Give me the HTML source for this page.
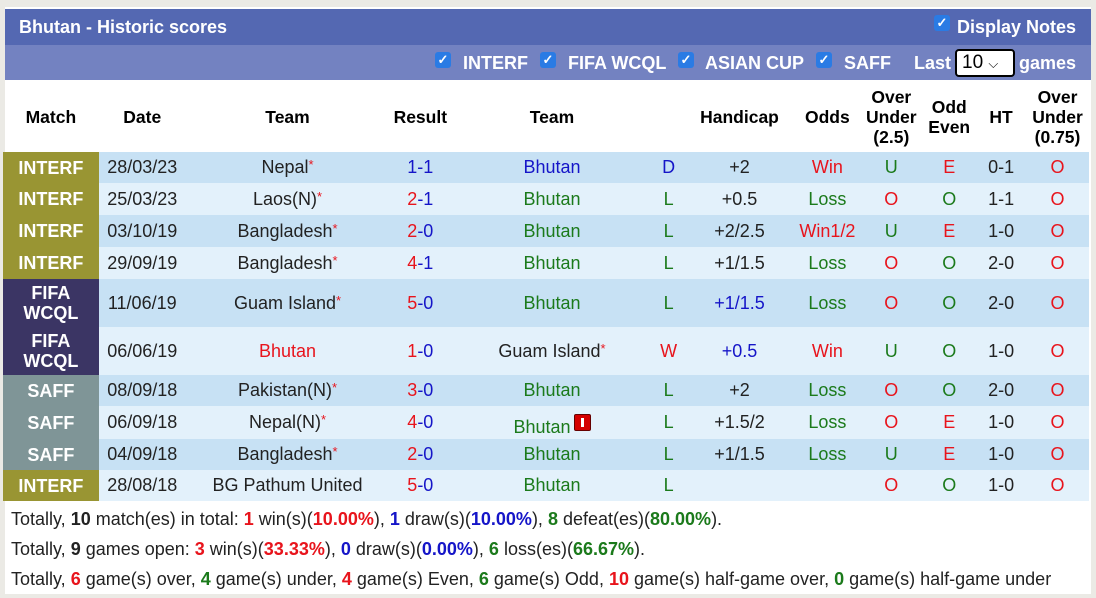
<!DOCTYPE html>
<html><head><style>
body{margin:0;background:#ebeae5;font-family:"Liberation Sans",Arial,sans-serif;width:1096px;height:598px;overflow:hidden;position:relative}
#box{position:absolute;left:5px;top:7px;width:1086px;height:587px;background:#fff}
#h1{position:absolute;left:0;top:2px;width:1086px;height:36px;background:#5468b2;color:#fff;font-weight:bold;font-size:18px}
#h2{position:absolute;left:0;top:38px;width:1086px;height:35px;background:#7382c1;color:#fff;font-weight:bold;font-size:18px}
#h2 span.t{position:absolute;top:8px}
.cb{position:absolute;display:inline-block;width:16px;height:16px;background:#2a7be4;border-radius:3px;color:#fff;font-size:13px;line-height:16px;text-align:center}
table{position:absolute;left:-2px;top:74px;border-collapse:collapse;table-layout:fixed;font-size:18px}
td{text-align:center;padding:0;white-space:nowrap}
th{font-size:17.5px;font-weight:bold;line-height:20px;height:71px;color:#000;padding:0}
.m{color:#fff;font-weight:bold;font-size:18px;line-height:20px}
tr.a td{background:#c7e1f4}tr.b td{background:#e3f1fb}
tr td.m.i{background:#999533}tr td.m.f{background:#3b3564}tr td.m.s{background:#7f9597}
.r{color:#e8141c}.g{color:#1b7a1b}.bl{color:#1515c8}.k{color:#222}
sup{color:#e8141c;font-size:13px;vertical-align:4px;line-height:0}
.card{display:inline-block;width:15px;height:15px;background:#d40000;border:1px solid #600;border-radius:2px;vertical-align:2px;position:relative;margin-left:3px}
.card:after{content:"";position:absolute;left:6px;top:3px;width:3px;height:9px;background:#fff}
#sum{position:absolute;left:6px;top:497px;font-size:18px;line-height:30px;color:#222;white-space:nowrap}
</style></head><body>
<div id="box">
<div id="h1"><span style="position:absolute;left:14px;top:8px">Bhutan - Historic scores</span><span class="cb" style="left:929px;top:6px">✓</span><span style="position:absolute;left:952px;top:8px">Display Notes</span></div>
<div id="h2">
<span class="cb" style="left:430px;top:7px">✓</span><span class="t" style="left:458px">INTERF</span>
<span class="cb" style="left:535px;top:7px">✓</span><span class="t" style="left:563px">FIFA WCQL</span>
<span class="cb" style="left:673px;top:7px">✓</span><span class="t" style="left:700px">ASIAN CUP</span>
<span class="cb" style="left:811px;top:7px">✓</span><span class="t" style="left:839px">SAFF</span>
<span class="t" style="left:909px">Last</span>
<span style="position:absolute;left:950px;top:4px;width:60px;height:28px;border:2px solid #000;border-radius:4px;background:#fff;color:#000;font-weight:normal;font-size:19px;line-height:24px;box-sizing:border-box;padding-left:5px">10 <span style="font-size:13px">&#x2335;</span></span>
<span class="t" style="left:1014px">games</span></div>
<table>
<colgroup><col style="width:96px"><col style="width:87px"><col style="width:204px"><col style="width:62px"><col style="width:202px"><col style="width:32px"><col style="width:110px"><col style="width:66px"><col style="width:62px"><col style="width:54px"><col style="width:50px"><col style="width:63px"></colgroup>
<tr><th>Match</th><th>Date</th><th>Team</th><th>Result</th><th>Team</th><th></th><th>Handicap</th><th>Odds</th><th>Over<br>Under<br>(2.5)</th><th>Odd<br>Even</th><th>HT</th><th>Over<br>Under<br>(0.75)</th></tr>
<tr class="a" style="height:31px"><td class="m i">INTERF</td><td class="k">28/03/23</td><td class="k">Nepal<sup>*</sup></td><td class="bl">1-1</td><td class="bl">Bhutan</td><td class="bl">D</td><td class="k">+2</td><td class="r">Win</td><td class="g">U</td><td class="r">E</td><td class="k">0-1</td><td class="r">O</td></tr>
<tr class="b" style="height:32px"><td class="m i">INTERF</td><td class="k">25/03/23</td><td class="k">Laos(N)<sup>*</sup></td><td><span class="r">2</span><span class="bl">-1</span></td><td class="g">Bhutan</td><td class="g">L</td><td class="k">+0.5</td><td class="g">Loss</td><td class="r">O</td><td class="g">O</td><td class="k">1-1</td><td class="r">O</td></tr>
<tr class="a" style="height:32px"><td class="m i">INTERF</td><td class="k">03/10/19</td><td class="k">Bangladesh<sup>*</sup></td><td><span class="r">2</span><span class="bl">-0</span></td><td class="g">Bhutan</td><td class="g">L</td><td class="k">+2/2.5</td><td class="r">Win1/2</td><td class="g">U</td><td class="r">E</td><td class="k">1-0</td><td class="r">O</td></tr>
<tr class="b" style="height:32px"><td class="m i">INTERF</td><td class="k">29/09/19</td><td class="k">Bangladesh<sup>*</sup></td><td><span class="r">4</span><span class="bl">-1</span></td><td class="g">Bhutan</td><td class="g">L</td><td class="k">+1/1.5</td><td class="g">Loss</td><td class="r">O</td><td class="g">O</td><td class="k">2-0</td><td class="r">O</td></tr>
<tr class="a" style="height:48px"><td class="m f">FIFA<br>WCQL</td><td class="k">11/06/19</td><td class="k">Guam Island<sup>*</sup></td><td><span class="r">5</span><span class="bl">-0</span></td><td class="g">Bhutan</td><td class="g">L</td><td class="bl">+1/1.5</td><td class="g">Loss</td><td class="r">O</td><td class="g">O</td><td class="k">2-0</td><td class="r">O</td></tr>
<tr class="b" style="height:48px"><td class="m f">FIFA<br>WCQL</td><td class="k">06/06/19</td><td class="r">Bhutan</td><td><span class="r">1</span><span class="bl">-0</span></td><td class="k">Guam Island<sup>*</sup></td><td class="r">W</td><td class="bl">+0.5</td><td class="r">Win</td><td class="g">U</td><td class="g">O</td><td class="k">1-0</td><td class="r">O</td></tr>
<tr class="a" style="height:31px"><td class="m s">SAFF</td><td class="k">08/09/18</td><td class="k">Pakistan(N)<sup>*</sup></td><td><span class="r">3</span><span class="bl">-0</span></td><td class="g">Bhutan</td><td class="g">L</td><td class="k">+2</td><td class="g">Loss</td><td class="r">O</td><td class="g">O</td><td class="k">2-0</td><td class="r">O</td></tr>
<tr class="b" style="height:33px"><td class="m s">SAFF</td><td class="k">06/09/18</td><td class="k">Nepal(N)<sup>*</sup></td><td><span class="r">4</span><span class="bl">-0</span></td><td class="g" style="padding-top:6px">Bhutan<span class="card"></span></td><td class="g">L</td><td class="k">+1.5/2</td><td class="g">Loss</td><td class="r">O</td><td class="r">E</td><td class="k">1-0</td><td class="r">O</td></tr>
<tr class="a" style="height:31px"><td class="m s">SAFF</td><td class="k">04/09/18</td><td class="k">Bangladesh<sup>*</sup></td><td><span class="r">2</span><span class="bl">-0</span></td><td class="g">Bhutan</td><td class="g">L</td><td class="k">+1/1.5</td><td class="g">Loss</td><td class="g">U</td><td class="r">E</td><td class="k">1-0</td><td class="r">O</td></tr>
<tr class="b" style="height:31px"><td class="m i">INTERF</td><td class="k">28/08/18</td><td class="k">BG Pathum United</td><td><span class="r">5</span><span class="bl">-0</span></td><td class="g">Bhutan</td><td class="g">L</td><td></td><td></td><td class="r">O</td><td class="g">O</td><td class="k">1-0</td><td class="r">O</td></tr>
</table>
<div id="sum">
Totally, <b>10</b> match(es) in total: <b class="r">1</b> win(s)(<b class="r">10.00%</b>), <b class="bl">1</b> draw(s)(<b class="bl">10.00%</b>), <b class="g">8</b> defeat(es)(<b class="g">80.00%</b>).<br>
Totally, <b>9</b> games open: <b class="r">3</b> win(s)(<b class="r">33.33%</b>), <b class="bl">0</b> draw(s)(<b class="bl">0.00%</b>), <b class="g">6</b> loss(es)(<b class="g">66.67%</b>).<br>
Totally, <b class="r">6</b> game(s) over, <b class="g">4</b> game(s) under, <b class="r">4</b> game(s) Even, <b class="g">6</b> game(s) Odd, <b class="r">10</b> game(s) half-game over, <b class="g">0</b> game(s) half-game under
</div>
</div>
</body></html>
